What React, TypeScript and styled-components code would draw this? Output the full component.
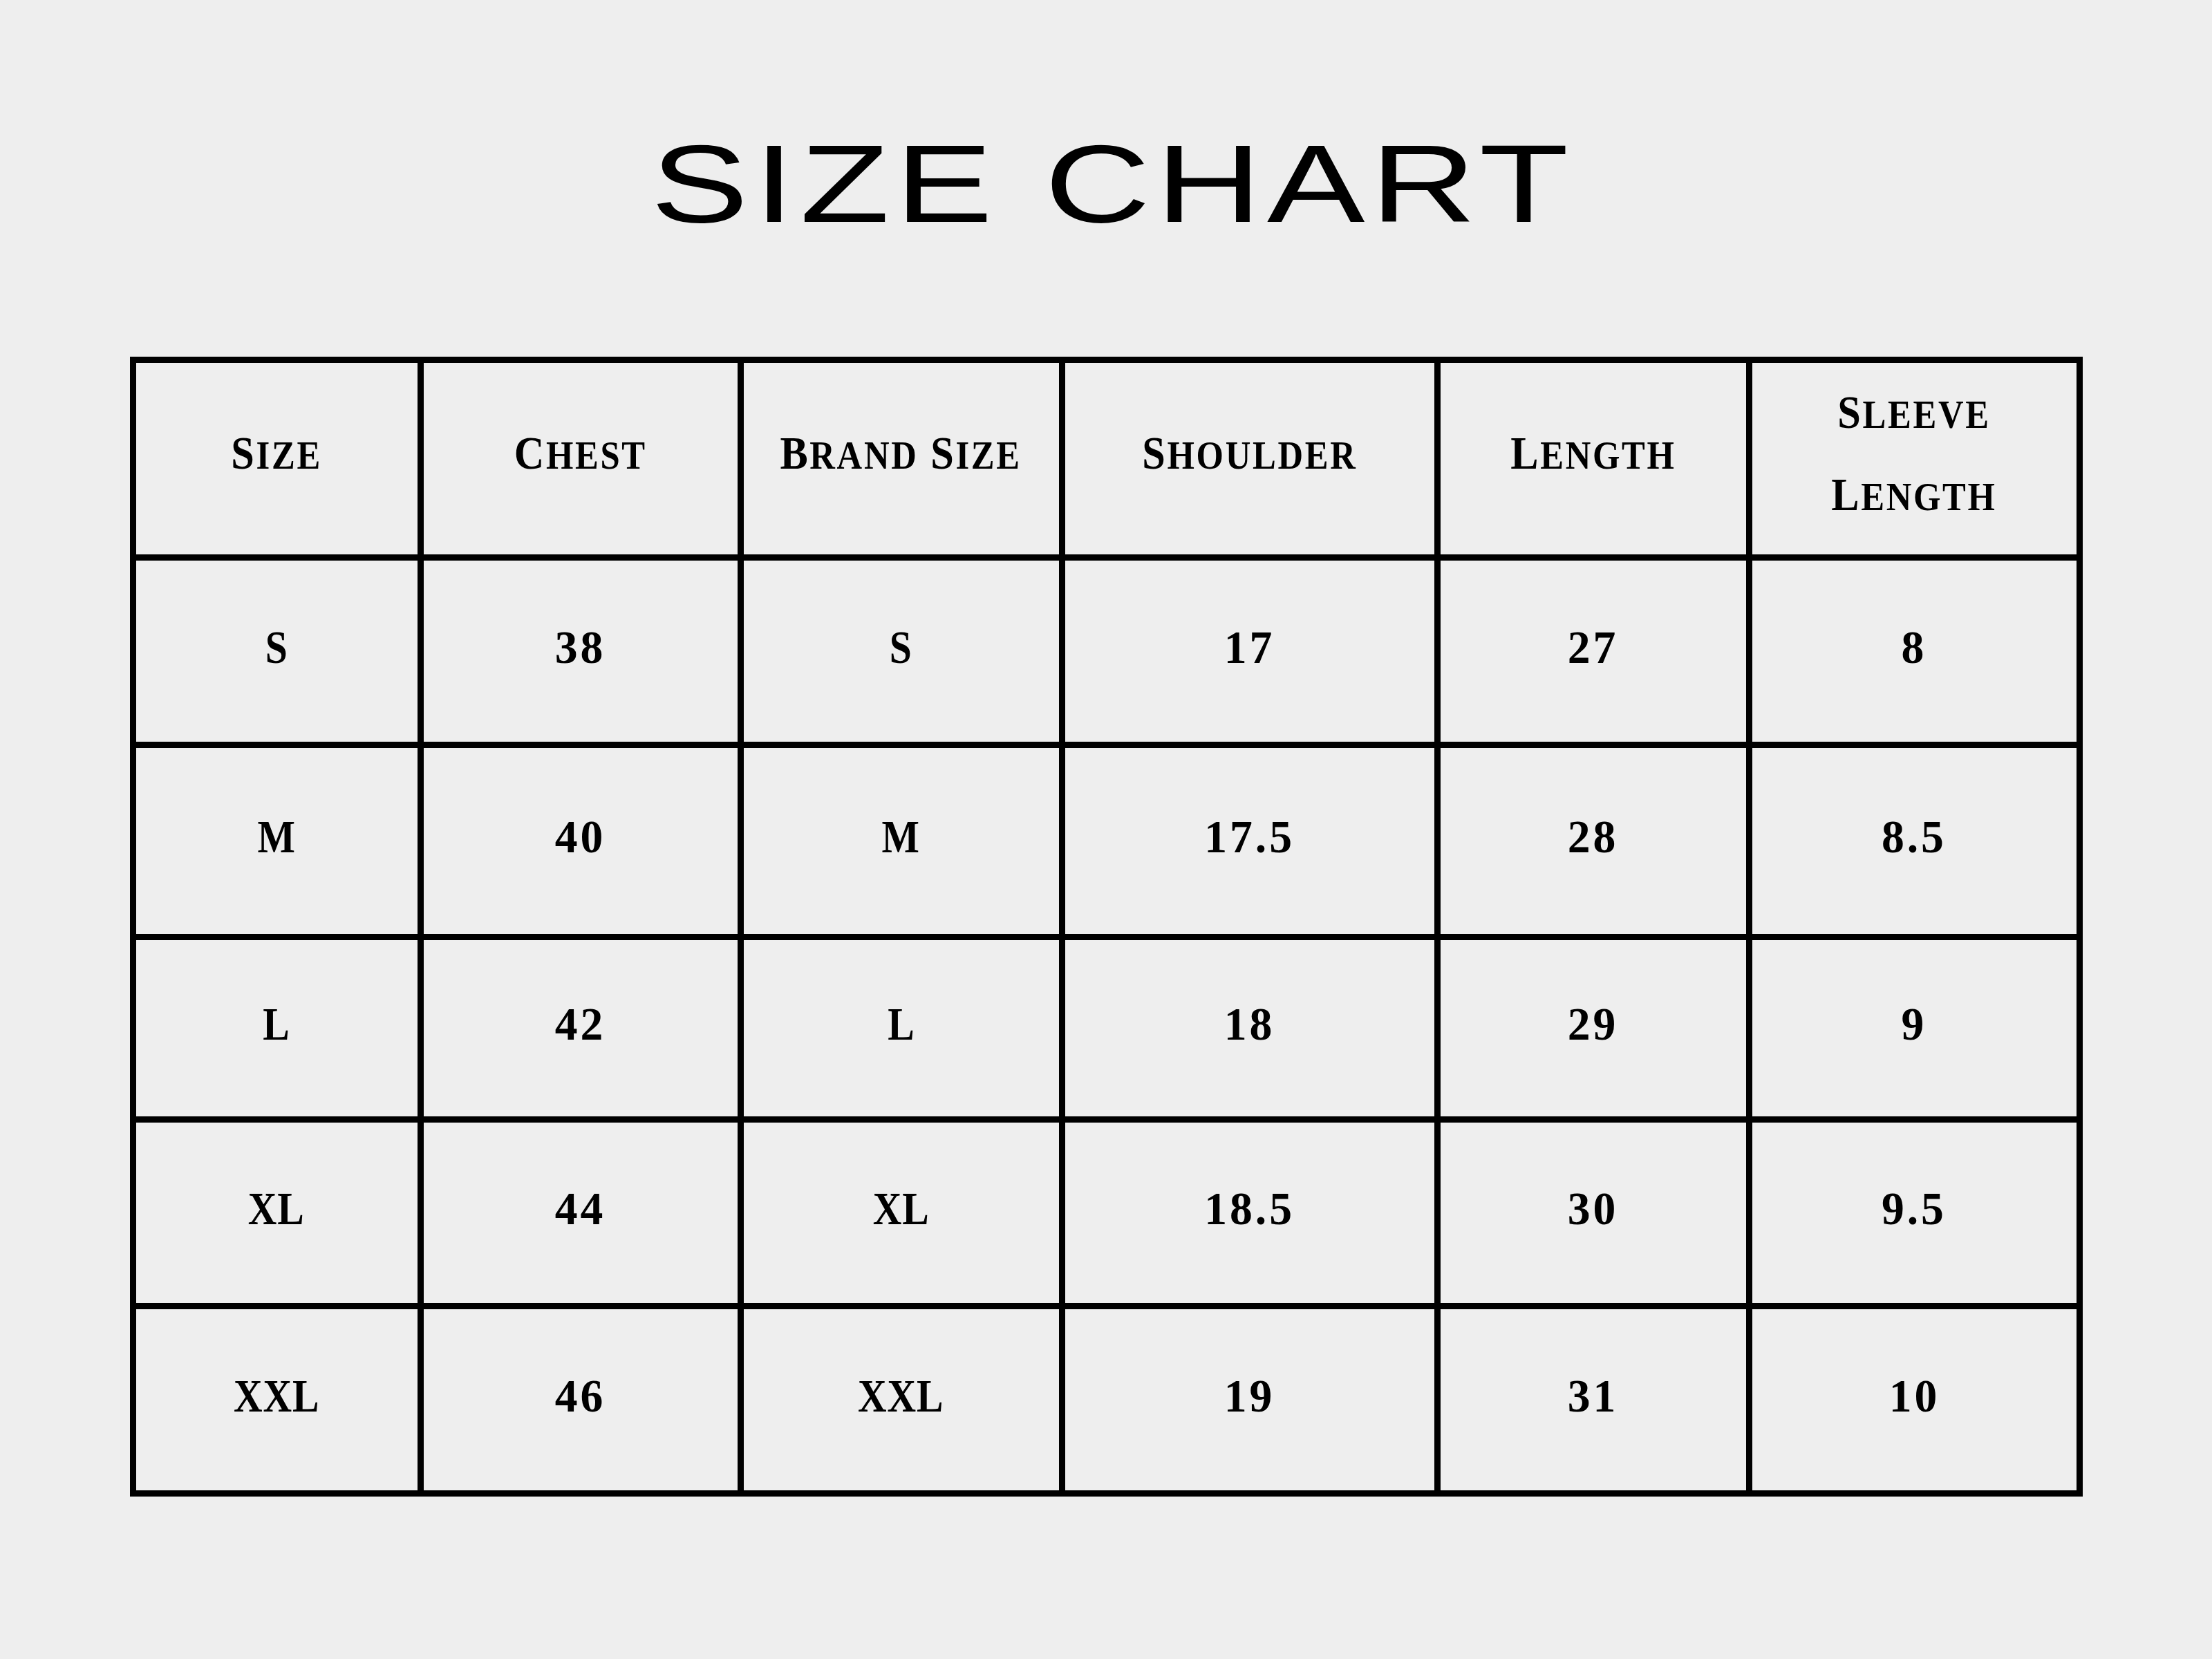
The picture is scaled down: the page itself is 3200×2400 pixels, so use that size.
import React from "react";
import styled, { createGlobalStyle } from "styled-components";

const Global = createGlobalStyle`
  html, body {
    margin: 0;
    padding: 0;
    background: #eeeeee;
  }
  body {
    width: 3200px;
    height: 2400px;
    overflow: hidden;
  }
`;

const Page = styled.div`
  width: 3200px;
  height: 2400px;
  background: #eeeeee;
  display: flex;
  flex-direction: column;
  align-items: center;
  padding-top: 183px;
  box-sizing: border-box;
`;

const Title = styled.h1`
  margin: 0;
  height: 162px;
  font-family: "Liberation Sans", Arial, sans-serif;
  font-weight: 400;
  font-size: 160px;
  line-height: 162px;
  color: #000;
  display: flex;
  justify-content: center;
  width: 100%;
`;

const TitleText = styled.span`
  display: inline-block;
  letter-spacing: 6px;
  transform: translate(9px, 2px) scaleX(1.325);
  transform-origin: center;
  white-space: pre;
`;

const Grid = styled.div<{ $cols: number[]; $rows: number[] }>`
  margin-top: 171px;
  display: grid;
  grid-template-columns: ${(p) => p.$cols.map((c) => `${c}px`).join(" ")};
  grid-template-rows: ${(p) => p.$rows.map((r) => `${r}px`).join(" ")};
  gap: 9px;
  padding: 9px;
  background: #000;
`;

const Cell = styled.div`
  background: #eeeeee;
  display: flex;
  flex-direction: column;
  align-items: center;
  justify-content: center;
  padding-bottom: 12px;
  box-sizing: border-box;
  font-family: "Liberation Serif", "Times New Roman", serif;
  font-weight: 700;
  font-size: 67px;
  line-height: 115px;
  color: #000;
  text-align: center;
`;

const Label = styled.span`
  display: inline-block;
  letter-spacing: 3px;
  text-transform: uppercase;
  transform: scaleX(0.9);
  white-space: nowrap;
`;

const Small = styled.span`
  font-size: 0.84em;
`;

const Value = styled.span<{ $alpha?: boolean }>`
  display: inline-block;
  letter-spacing: ${(p) => (p.$alpha ? "1px" : "4px")};
  transform: scaleX(${(p) => (p.$alpha ? 0.86 : 0.98)});
  white-space: nowrap;
`;

const SmallCaps: React.FC<{ text: string }> = ({ text }) => (
  <Label>
    {text.split(" ").map((w, i) => (
      <React.Fragment key={i}>
        {i > 0 ? " " : ""}
        {w[0]}
        <Small>{w.slice(1)}</Small>
      </React.Fragment>
    ))}
  </Label>
);

const cols = [407, 454, 456, 534, 442, 469];
const rows = [277, 262, 269, 255, 261, 262];

const headers: string[][] = [
  ["Size"],
  ["Chest"],
  ["Brand Size"],
  ["Shoulder"],
  ["Length"],
  ["Sleeve", "Length"],
];

const data: string[][] = [
  ["S", "38", "S", "17", "27", "8"],
  ["M", "40", "M", "17.5", "28", "8.5"],
  ["L", "42", "L", "18", "29", "9"],
  ["XL", "44", "XL", "18.5", "30", "9.5"],
  ["XXL", "46", "XXL", "19", "31", "10"],
];

export default function App() {
  return (
    <>
      <Global />
      <Page>
        <Title>
          <TitleText>SIZE CHART</TitleText>
        </Title>
        <Grid $cols={cols} $rows={rows}>
          {headers.map((lines, i) => (
            <Cell key={`h${i}`}>
              {lines.map((l, j) => (
                <SmallCaps key={j} text={l} />
              ))}
            </Cell>
          ))}
          {data.map((row, r) =>
            row.map((v, c) => (
              <Cell key={`${r}-${c}`}>
                <Value $alpha={/[A-Z]/.test(v)}>{v}</Value>
              </Cell>
            ))
          )}
        </Grid>
      </Page>
    </>
  );
}
